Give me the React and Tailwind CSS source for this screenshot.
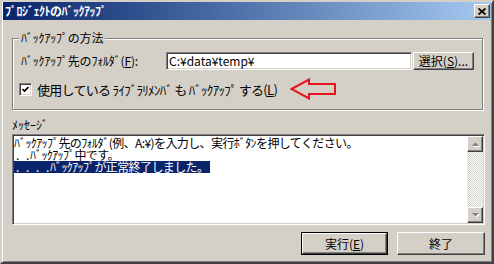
import React from 'react';

const raised =
  'bg-[#d4d0c8] border border-t-white border-l-white border-r-[#404040] border-b-[#404040] shadow-[inset_-1px_-1px_0_#808080]';
const sunken =
  'border border-t-[#808080] border-l-[#808080] border-r-white border-b-white shadow-[inset_1px_1px_0_#404040,inset_-1px_-1px_0_#d4d0c8]';

const U = ({ children }) => <span className="underline underline-offset-1">{children}</span>;

// 点線の「. . 」部分
const Dots = ({ count }) => (
  <>
    {Array.from({ length: count }).map((_, i) => (
      <span key={i} className={`inline-block pl-[2px] ${i === count - 1 ? 'w-[6px]' : 'w-[10px]'}`}>
        .
      </span>
    ))}
  </>
);

const Triangle = ({ up }) => (
  <svg width="9" height="6" viewBox="0 0 9 6">
    {up ? (
      <>
        <polygon points="1,5 8,5 4.5,1.5" fill="#fff" transform="translate(1,1)" />
        <polygon points="1,5 8,5 4.5,1.5" fill="#808080" />
      </>
    ) : (
      <>
        <polygon points="1,1 8,1 4.5,4.5" fill="#fff" transform="translate(1,1)" />
        <polygon points="1,1 8,1 4.5,4.5" fill="#808080" />
      </>
    )}
  </svg>
);

const App = () => {
  return (
    <div className="w-[494px] h-[264px] bg-[#d4d0c8] border-2 border-t-[#d4d0c8] border-l-[#d4d0c8] border-r-[#404040] border-b-[#404040] shadow-[inset_1px_1px_0_#fff,inset_-1px_-1px_0_#808080] flex flex-col font-['Noto_Sans_CJK_JP',sans-serif] text-[12px] text-black overflow-hidden">
      {/* タイトルバー */}
      <div className="h-[18px] mx-[1px] flex items-center pl-[2px] bg-linear-to-r from-[#0a246a] to-[#a6caf0]">
        <span className="text-white font-bold text-[12px] tracking-[-0.5px] leading-none">ﾌﾟﾛｼﾞｪｸﾄのﾊﾞｯｸｱｯﾌﾟ</span>
        <div className={`ml-auto mr-[1px] w-[16px] h-[14px] flex items-center justify-center ${raised}`}>
          <svg width="8" height="7" viewBox="0 0 8 7">
            <path d="M0.5 0.5 L7.5 6.5 M7.5 0.5 L0.5 6.5" stroke="#000" strokeWidth="1.8" />
          </svg>
        </div>
      </div>

      <div className="flex-1 flex flex-col pl-[10px] pr-[7px]">
        {/* バックアップの方法 */}
        <fieldset className="mt-[11px] mr-[2px] border border-[#808080] shadow-[1px_1px_0_#fff,inset_1px_1px_0_#fff] pl-[6px] pr-[8px] pb-[10px]">
          <legend className="px-[2px] leading-[14px] tracking-[-0.2px] bg-[#d4d0c8]">ﾊﾞｯｸｱｯﾌﾟの方法</legend>
          <div className="ml-[2px] mt-[7px] flex items-center h-[18px]">
            <span className="w-[145px] leading-none tracking-[-0.2px]">
              ﾊﾞｯｸｱｯﾌﾟ先のﾌｫﾙﾀﾞ(<U>F</U>):
            </span>
            <div className={`w-[246px] h-[18px] bg-white pl-[2px] flex items-center leading-none ${sunken}`}>
              C:¥data¥temp¥
            </div>
            <button className={`ml-[1px] w-[61px] h-[18px] flex items-center justify-center leading-none ${raised}`}>
              選択(<U>S</U>)...
            </button>
          </div>
          <div className="mt-[9px] h-[20px] flex items-center">
            <div className={`w-[13px] h-[13px] bg-white flex items-center justify-center ${sunken}`}>
              <svg width="7" height="7" viewBox="0 0 7 7">
                <path d="M0.5 3 L2.5 5 L6.5 1" stroke="#000" strokeWidth="1.6" fill="none" />
              </svg>
            </div>
            <span className="ml-[5px] w-[253px] text-[13px] tracking-[-0.7px] leading-none whitespace-nowrap">
              使用している ﾗｲﾌﾞﾗﾘﾒﾝﾊﾞ も ﾊﾞｯｸｱｯﾌﾟ する(<U>L</U>)
            </span>
            <svg width="46" height="22" viewBox="0 0 46 22">
              <polygon
                points="1.5,11 19,1.5 19,6 45,6 45,16 19,16 19,20.5"
                fill="none"
                stroke="#e8141c"
                strokeWidth="2"
              />
            </svg>
          </div>
        </fieldset>

        {/* メッセージ */}
        <div className="mt-[8px] leading-[14px]">ﾒｯｾｰｼﾞ</div>
        <div className={`mt-[2px] h-[91px] bg-white flex ${sunken} p-[1px]`}>
          <div className="flex-1 pt-[1px] leading-[12px] tracking-[-0.6px] whitespace-nowrap">
            <div className="h-[12px]">ﾊﾞｯｸｱｯﾌﾟ先のﾌｫﾙﾀﾞ(例、A:¥)を入力し、実行ﾎﾞﾀﾝを押してください。</div>
            <div className="h-[12px]">
              <Dots count={2} />
              ﾊﾞｯｸｱｯﾌﾟ中です。
            </div>
            <div className="h-[12px]">
              <span className="inline-block h-[12px] leading-[12px] bg-[#0a246a] text-white pr-[2px]">
                <Dots count={4} />
                ﾊﾞｯｸｱｯﾌﾟが正常終了しました。
              </span>
            </div>
          </div>
          <div className="w-[16px] flex flex-col bg-[repeating-conic-gradient(#d4d0c8_0_25%,#fff_0_50%)] bg-[length:2px_2px]">
            <div className={`w-[16px] h-[16px] flex items-center justify-center ${raised}`}>
              <Triangle up />
            </div>
            <div className="flex-1" />
            <div className={`w-[16px] h-[16px] flex items-center justify-center ${raised}`}>
              <Triangle />
            </div>
          </div>
        </div>

        {/* ボタン */}
        <div className="mt-[7px] flex justify-end gap-[9px]">
          <button className="w-[87px] h-[23px] border border-black p-0">
            <div className={`w-full h-full flex items-center justify-center leading-none ${raised}`}>
              実行(<U>E</U>)
            </div>
          </button>
          <button className={`w-[88px] h-[23px] flex items-center justify-center leading-none ${raised}`}>
            終了
          </button>
        </div>
      </div>
    </div>
  );
};

export default App;
